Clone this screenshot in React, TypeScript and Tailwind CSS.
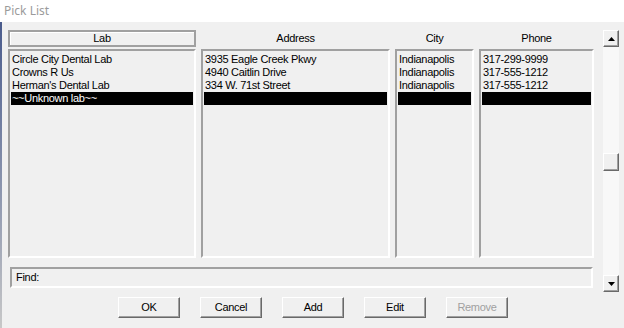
const labs = [
  { lab: "Circle City Dental Lab", address: "3935 Eagle Creek Pkwy", city: "Indianapolis", phone: "317-299-9999" },
  { lab: "Crowns R Us", address: "4940 Caitlin Drive", city: "Indianapolis", phone: "317-555-1212" },
  { lab: "Herman's Dental Lab", address: "334 W. 71st Street", city: "Indianapolis", phone: "317-555-1212" },
  { lab: "~~Unknown lab~~", address: "", city: "", phone: "", selected: true },
];

type Field = "lab" | "address" | "city" | "phone";

const columns: { key: Field; title: string; width: string; boxed?: boolean }[] = [
  { key: "lab", title: "Lab", width: "w-[188px]", boxed: true },
  { key: "address", title: "Address", width: "w-[189px]" },
  { key: "city", title: "City", width: "w-[79px]" },
  { key: "phone", title: "Phone", width: "w-[115px]" },
];

const raised =
  "border border-t-white border-l-white border-r-[#696969] border-b-[#696969] shadow-[inset_-1px_-1px_0_#a0a0a0] bg-[#f0f0f0]";
const sunken =
  "border-2 border-t-[#a0a0a0] border-l-[#a0a0a0] border-r-white border-b-white";

function ListColumn({ field }: { field: Field }) {
  return (
    <div className={`${sunken} h-full pt-[2px] px-[1px]`}>
      {labs.map((row) => (
        <div
          key={row.lab}
          className={`h-[13px] leading-[13px] pl-[1px] whitespace-nowrap overflow-hidden ${
            row.selected ? "bg-black text-white" : ""
          }`}
        >
          {row[field]}
        </div>
      ))}
    </div>
  );
}

function Arrow({ down }: { down?: boolean }) {
  return (
    <svg width="7" height="4" viewBox="0 0 7 4">
      {down ? <path d="M0 0h7L3.5 4z" fill="#000" /> : <path d="M0 4h7L3.5 0z" fill="#000" />}
    </svg>
  );
}

function Button({ label, disabled }: { label: string; disabled?: boolean }) {
  return (
    <div
      className={`${raised} w-[62px] h-[21px] flex items-center justify-center ${
        disabled ? "text-[#a0a0a0]" : "text-black"
      }`}
    >
      {label}
    </div>
  );
}

export default function App() {
  return (
    <div className="w-[624px] h-[328px] bg-[#f0f0f0] flex flex-col overflow-hidden font-['Liberation_Sans',Arial,sans-serif] text-[11px] tracking-[-0.3px] text-black">
      <div className="h-[22px] bg-white flex items-center pl-[4px]">
        <span className="font-['Noto_Sans',sans-serif] text-[12px] tracking-normal text-[#9b9b9b]">
          Pick List
        </span>
      </div>

      <div className="flex flex-1">
        <div className="w-[2px] bg-gradient-to-b from-[#4a5b8c] to-[#c8c8c8]" />

        <div className="flex flex-col pl-[6px] pt-[8px]">
          <div className="flex items-start">
            <div className="flex flex-col w-[586px]">
              <div className="flex gap-[5px] h-[17px]">
                {columns.map((c) => (
                  <div
                    key={c.key}
                    className={`${c.width} flex items-center justify-center ${
                      c.boxed ? "border-2 border-[#a0a0a0] shadow-[inset_1px_1px_0_#fff]" : ""
                    }`}
                  >
                    {c.title}
                  </div>
                ))}
              </div>

              <div className="flex gap-[5px] h-[209px] mt-[2px]">
                {columns.map((c) => (
                  <div key={c.key} className={c.width}>
                    <ListColumn field={c.key} />
                  </div>
                ))}
              </div>

              <div className={`${sunken} ml-[2px] w-[583px] h-[21px] mt-[9px] flex items-center pl-[4px]`}>
                Find:
              </div>
            </div>

            <div className="ml-[9px] w-[16px] h-[262px] flex flex-col bg-[#f8f8f8]">
              <div className={`${raised} h-[17px] flex items-center justify-center`}>
                <Arrow />
              </div>
              <div className="h-[106px]" />
              <div className={`${raised} h-[18px]`} />
              <div className="flex-1" />
              <div className={`${raised} h-[17px] flex items-center justify-center`}>
                <Arrow down />
              </div>
            </div>
          </div>

          <div className="flex gap-[20px] pl-[110px] mt-[5px]">
            <Button label="OK" />
            <Button label="Cancel" />
            <Button label="Add" />
            <Button label="Edit" />
            <Button label="Remove" disabled />
          </div>
        </div>
      </div>
    </div>
  );
}
